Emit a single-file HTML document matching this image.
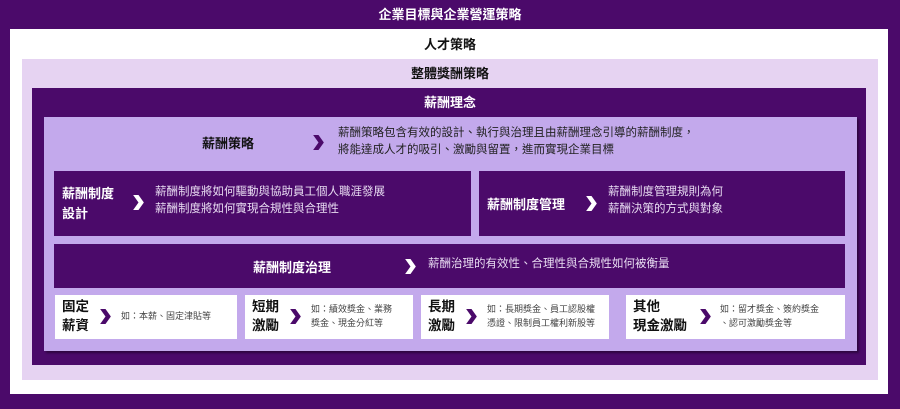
<!DOCTYPE html>
<html><head><meta charset="utf-8"><style>
*{margin:0;padding:0;box-sizing:border-box}
body{width:900px;height:409px;background:#4b0a6a;position:relative;overflow:hidden;font-family:"Liberation Sans","Noto Sans CJK TC",sans-serif}
.a{position:absolute}
.t{position:absolute;font-weight:bold;font-size:13px;white-space:nowrap}
.w{color:#fff}
.d{background:#4b0a6a}
.s{position:absolute;font-size:11.5px;line-height:17px;color:#e8dcf2;white-space:nowrap}
.card{position:absolute;background:#fff;top:295px;height:44px}
.card b{position:absolute;left:7px;top:2px;font-size:13.5px;line-height:19px;color:#111}
.card span{position:absolute;font-size:9px;line-height:14px;color:#444;white-space:nowrap}
.ch{position:absolute;width:11px;height:15px}
</style></head><body>
<div class="t w" style="left:0;width:900px;text-align:center;top:4px">企業目標與企業營運策略</div>
<div class="a" style="left:10px;top:29px;width:878px;height:365px;background:#fff"></div>
<div class="t" style="left:0;width:900px;text-align:center;top:34px;color:#111">人才策略</div>
<div class="a" style="left:22px;top:59px;width:856px;height:321px;background:#e6d3f2"></div>
<div class="t" style="left:0;width:900px;text-align:center;top:63px;color:#111">整體獎酬策略</div>
<div class="a d" style="left:32px;top:88px;width:834px;height:277px"></div>
<div class="t w" style="left:0;width:900px;text-align:center;top:92px">薪酬理念</div>
<div class="a" style="left:44px;top:117px;width:813px;height:234px;background:#c3a9ec;box-shadow:2px 2px 2px rgba(0,0,0,.4)"></div>
<div class="t" style="left:202px;top:133px;color:#111">薪酬策略</div>
<svg class="ch" style="left:313px;top:135px" viewBox="0 0 10 14"><path d="M0 0H5L10 7L5 14H0L5 7Z" fill="#4b0a6a"/></svg>
<div class="s" style="left:338px;top:125px;color:#222">薪酬策略包含有效的設計、執行與治理且由薪酬理念引導的薪酬制度，<br>將能達成人才的吸引、激勵與留置，進而實現企業目標</div>
<div class="a d" style="left:54px;top:171px;width:417px;height:65px"></div>
<div class="t w" style="left:62px;top:184px;line-height:20px">薪酬制度<br>設計</div>
<svg class="ch" style="left:133px;top:195px" viewBox="0 0 10 14"><path d="M0 0H5L10 7L5 14H0L5 7Z" fill="#fff"/></svg>
<div class="s" style="left:155px;top:184px">薪酬制度將如何驅動與協助員工個人職涯發展<br>薪酬制度將如何實現合規性與合理性</div>
<div class="a d" style="left:479px;top:171px;width:366px;height:65px"></div>
<div class="t w" style="left:487px;top:194px">薪酬制度管理</div>
<svg class="ch" style="left:586px;top:196px" viewBox="0 0 10 14"><path d="M0 0H5L10 7L5 14H0L5 7Z" fill="#fff"/></svg>
<div class="s" style="left:608px;top:184px">薪酬制度管理規則為何<br>薪酬決策的方式與對象</div>
<div class="a d" style="left:54px;top:244px;width:791px;height:44px"></div>
<div class="t w" style="left:253px;top:257px">薪酬制度治理</div>
<svg class="ch" style="left:405px;top:259px" viewBox="0 0 10 14"><path d="M0 0H5L10 7L5 14H0L5 7Z" fill="#fff"/></svg>
<div class="s" style="left:428px;top:256px">薪酬治理的有效性、合理性與合規性如何被衡量</div>

<div class="card" style="left:55px;width:182px"><b>固定<br>薪資</b><svg class="ch" style="left:45px;top:14px" viewBox="0 0 10 14"><path d="M0 0H5L10 7L5 14H0L5 7Z" fill="#4b0a6a"/></svg><span style="left:66px;top:14px">如：本薪、固定津貼等</span></div>
<div class="card" style="left:245px;width:168px"><b>短期<br>激勵</b><svg class="ch" style="left:45px;top:14px" viewBox="0 0 10 14"><path d="M0 0H5L10 7L5 14H0L5 7Z" fill="#4b0a6a"/></svg><span style="left:66px;top:7px">如：績效獎金、業務<br>獎金、現金分紅等</span></div>
<div class="card" style="left:421px;width:188px"><b>長期<br>激勵</b><svg class="ch" style="left:45px;top:14px" viewBox="0 0 10 14"><path d="M0 0H5L10 7L5 14H0L5 7Z" fill="#4b0a6a"/></svg><span style="left:66px;top:7px">如：長期獎金、員工認股權<br>憑證、限制員工權利新股等</span></div>
<div class="card" style="left:626px;width:219px"><b>其他<br>現金激勵</b><svg class="ch" style="left:74px;top:14px" viewBox="0 0 10 14"><path d="M0 0H5L10 7L5 14H0L5 7Z" fill="#4b0a6a"/></svg><span style="left:94px;top:7px">如：留才獎金、簽約獎金<br>、認可激勵獎金等</span></div>
</body></html>
